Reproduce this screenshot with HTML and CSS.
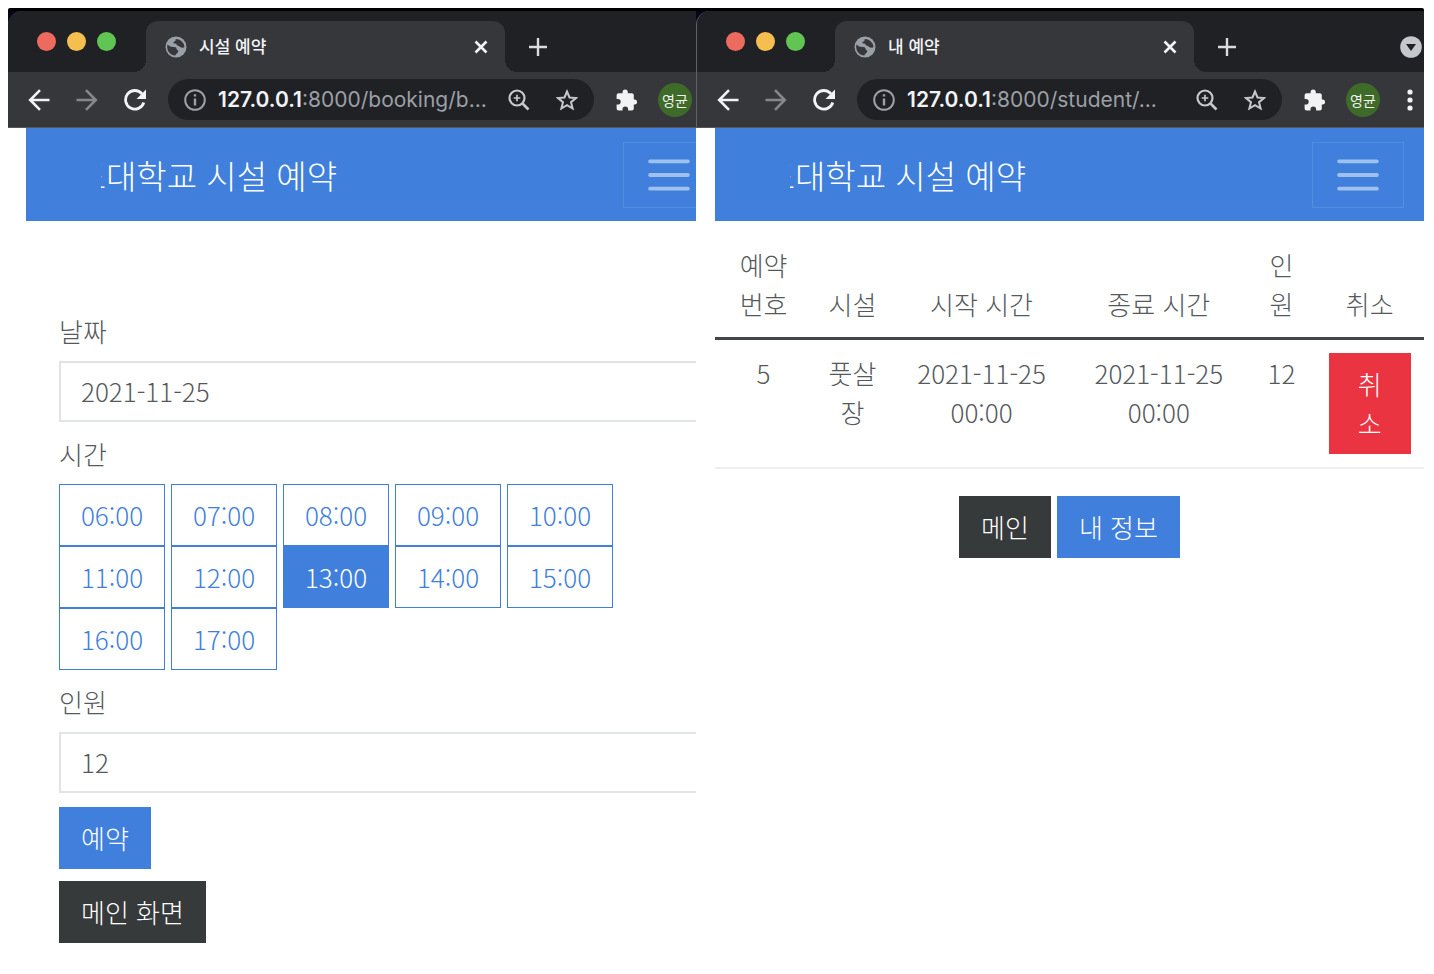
FILE: index.html
```html
<!DOCTYPE html>
<html lang="ko">
<head>
<meta charset="utf-8">
<title>시설 예약</title>
<link rel="stylesheet" href="styles.css">
</head>
<body>
<svg class="sprite" aria-hidden="true">
  <symbol id="globe" viewBox="0 0 22 22"><circle cx="11" cy="11" r="10.500" fill="#9aa0a6"/><path d="M2.500 8.500c2 2 4 2.600 6.500 2.400 2 0 2.500.8 2.500 2 0 1 1.800 1 1.800 2.300 0 1.500-2.300 2.500-3 4.400A8.800 8.800 0 0 1 2.500 8.500zM10 3c1.500.3 1 1.800-.5 2.400-1.800.8-1.500 2 .5 2.200 1.800.2 1.500 1.800 3 2.200 1.800.5 2.800 2 4.500 2 1 0 1.500-.3 2-.8A8.700 8.700 0 0 0 10 3z" fill="#36373b"/></symbol>
  <symbol id="close" viewBox="0 0 14 14"><path d="M1.500 1.500l11 11M12.500 1.500l-11 11" stroke="#f1f3f4" stroke-width="2.600"/></symbol>
  <symbol id="plus" viewBox="0 0 18 18"><path d="M9 0v18M0 9h18" stroke="#dadce0" stroke-width="2.400"/></symbol>
  <symbol id="back" viewBox="0 0 22 22"><path d="M21.500 11H2.500M12 1.200L2.200 11 12 20.800" fill="none" stroke="currentColor" stroke-width="2.600"/></symbol>
  <symbol id="forward" viewBox="0 0 22 22"><path d="M.5 11h19M10 1.200l9.800 9.800-9.800 9.800" fill="none" stroke="currentColor" stroke-width="2.600"/></symbol>
  <symbol id="reload" viewBox="0 0 22 22"><path d="M19.800 13.500A9.300 9.300 0 1 1 18 4.800" fill="none" stroke="#f1f3f4" stroke-width="2.800"/><path d="M22 .5v9.500h-9.500z" fill="#f1f3f4"/></symbol>
  <symbol id="info" viewBox="0 0 22 22"><circle cx="11" cy="11" r="9.800" fill="none" stroke="#9aa0a6" stroke-width="2"/><path d="M11 9.500v7M11 5.200v2.400" stroke="#9aa0a6" stroke-width="2.400"/></symbol>
  <symbol id="zoom" viewBox="0 0 22 22"><circle cx="9" cy="9" r="7.500" fill="none" stroke="#c6c9cc" stroke-width="2.200"/><path d="M14.500 14.500l6 6" stroke="#c6c9cc" stroke-width="2.600"/><path d="M9 5.700v6.600M5.700 9h6.600" stroke="#c6c9cc" stroke-width="1.700"/></symbol>
  <symbol id="star" viewBox="0 0 22 22"><path d="M11 2.500l2.500 6 6.500.5-5 4.200 1.600 6.300L11 16.100l-5.600 3.400L7 13.200 2 9l6.500-.5z" fill="none" stroke="#c6c9cc" stroke-width="2"/></symbol>
  <symbol id="puzzle" viewBox="0 0 22 22"><path d="M19 10.500h-1.200V6.300a2 2 0 0 0-2-2h-4V3a2.600 2.600 0 0 0-5.200 0v1.300h-4a2 2 0 0 0-2 2V10h1.300a2.800 2.800 0 0 1 0 5.600H.6v4a2 2 0 0 0 2 2h3.900v-1.300a2.800 2.800 0 0 1 5.600 0v1.300h3.700a2 2 0 0 0 2-2v-4H19a2.600 2.600 0 0 0 0-5.100z" fill="#f1f3f4"/></symbol>
  <symbol id="kebab" viewBox="0 0 20 22"><circle cx="10" cy="3" r="2.600" fill="#f1f3f4"/><circle cx="10" cy="11" r="2.600" fill="#f1f3f4"/><circle cx="10" cy="19" r="2.600" fill="#f1f3f4"/></symbol>
  <symbol id="caret" viewBox="0 0 22 22"><circle cx="11" cy="11" r="10.800" fill="#c4c7cb"/><path d="M6 8h10l-5 7z" fill="#202124"/></symbol>
  <symbol id="bars" viewBox="0 0 40 34"><path d="M2 4h36M2 17h36M2 30h36" stroke="#a0c0ee" stroke-width="3.600" stroke-linecap="round"/></symbol>
</svg>
<div class="screens">
  <section class="window" aria-label="시설 예약">
    <div class="chrome">
      <div class="tabstrip">
        <div class="lights"><span class="light red"></span><span class="light amber"></span><span class="light green"></span></div>
        <div class="tab"><svg class="icon"><use href="#globe"/></svg><span class="tab-title">시설 예약</span><button class="bare" aria-label="탭 닫기"><svg class="icon-close"><use href="#close"/></svg></button></div>
        <button class="bare new-tab" aria-label="새 탭"><svg class="icon-plus"><use href="#plus"/></svg></button>
      </div>
      <div class="toolbar">
        <div class="nav">
          <button class="bare" aria-label="뒤로"><svg class="icon"><use href="#back"/></svg></button>
          <button class="bare dim" aria-label="앞으로"><svg class="icon"><use href="#forward"/></svg></button>
          <button class="bare" aria-label="새로고침"><svg class="icon"><use href="#reload"/></svg></button>
        </div>
        <div class="omnibox">
          <svg class="icon"><use href="#info"/></svg>
          <div class="url"><b>127.0.0.1</b>:8000/booking/b...</div>
          <button class="bare" aria-label="확대"><svg class="icon"><use href="#zoom"/></svg></button>
          <button class="bare" aria-label="북마크"><svg class="icon"><use href="#star"/></svg></button>
        </div>
        <div class="actions">
          <button class="bare" aria-label="확장 프로그램"><svg class="icon"><use href="#puzzle"/></svg></button>
          <button class="bare avatar">영균</button>
        </div>
      </div>
    </div>
    <div class="page page-cut">
      <header class="navbar">
        <a class="brand" href="#"><span>도대학교 시설 예약</span></a>
        <button class="toggler" aria-label="메뉴"><svg class="icon-bars"><use href="#bars"/></svg></button>
      </header>
      <form class="booking">
        <div class="field">
          <label for="date">날짜</label>
          <input class="control" id="date" type="text" value="2021-11-25">
        </div>
        <fieldset class="field">
          <legend>시간</legend>
          <div class="times">
            <label class="time"><input type="radio" name="time">06:00</label>
            <label class="time"><input type="radio" name="time">07:00</label>
            <label class="time"><input type="radio" name="time">08:00</label>
            <label class="time"><input type="radio" name="time">09:00</label>
            <label class="time"><input type="radio" name="time">10:00</label>
            <label class="time"><input type="radio" name="time">11:00</label>
            <label class="time"><input type="radio" name="time">12:00</label>
            <label class="time"><input type="radio" name="time" checked>13:00</label>
            <label class="time"><input type="radio" name="time">14:00</label>
            <label class="time"><input type="radio" name="time">15:00</label>
            <label class="time"><input type="radio" name="time">16:00</label>
            <label class="time"><input type="radio" name="time">17:00</label>
          </div>
        </fieldset>
        <div class="field">
          <label for="people">인원</label>
          <input class="control" id="people" type="text" value="12">
        </div>
        <div class="stack">
          <button class="btn primary" type="button">예약</button>
          <button class="btn dark" type="button">메인 화면</button>
        </div>
      </form>
    </div>
  </section>

  <section class="window window-front" aria-label="내 예약">
    <div class="chrome">
      <div class="tabstrip">
        <div class="lights"><span class="light red"></span><span class="light amber"></span><span class="light green"></span></div>
        <div class="tab"><svg class="icon"><use href="#globe"/></svg><span class="tab-title">내 예약</span><button class="bare" aria-label="탭 닫기"><svg class="icon-close"><use href="#close"/></svg></button></div>
        <button class="bare new-tab" aria-label="새 탭"><svg class="icon-plus"><use href="#plus"/></svg></button>
        <button class="bare tab-search" aria-label="탭 검색"><svg class="icon"><use href="#caret"/></svg></button>
      </div>
      <div class="toolbar">
        <div class="nav">
          <button class="bare" aria-label="뒤로"><svg class="icon"><use href="#back"/></svg></button>
          <button class="bare dim" aria-label="앞으로"><svg class="icon"><use href="#forward"/></svg></button>
          <button class="bare" aria-label="새로고침"><svg class="icon"><use href="#reload"/></svg></button>
        </div>
        <div class="omnibox">
          <svg class="icon"><use href="#info"/></svg>
          <div class="url"><b>127.0.0.1</b>:8000/student/...</div>
          <button class="bare" aria-label="확대"><svg class="icon"><use href="#zoom"/></svg></button>
          <button class="bare" aria-label="북마크"><svg class="icon"><use href="#star"/></svg></button>
        </div>
        <div class="actions">
          <button class="bare" aria-label="확장 프로그램"><svg class="icon"><use href="#puzzle"/></svg></button>
          <button class="bare avatar">영균</button>
          <button class="bare" aria-label="더보기"><svg class="icon-kebab"><use href="#kebab"/></svg></button>
        </div>
      </div>
    </div>
    <div class="page">
      <header class="navbar">
        <a class="brand" href="#"><span>도대학교 시설 예약</span></a>
        <button class="toggler" aria-label="메뉴"><svg class="icon-bars"><use href="#bars"/></svg></button>
      </header>
      <table class="list">
        <colgroup><col class="c-no"><col class="c-place"><col class="c-when"><col class="c-when"><col class="c-count"><col class="c-cancel"></colgroup>
        <thead>
          <tr><th>예약<br>번호</th><th>시설</th><th>시작 시간</th><th>종료 시간</th><th>인원</th><th>취소</th></tr>
        </thead>
        <tbody>
          <tr><td>5</td><td>풋살장</td><td>2021-11-25 00:00</td><td>2021-11-25 00:00</td><td>12</td><td><button class="btn danger">취소</button></td></tr>
        </tbody>
      </table>
      <div class="links">
        <a class="btn dark" href="#">메인</a>
        <a class="btn primary" href="#">내 정보</a>
      </div>
    </div>
  </section>
</div>
</body>
</html>
```
FILE: styles.css
```css
* { box-sizing: border-box; }

body {
  margin: 0;
  padding: 8px 10px 0 8px;
  background: #fff;
  color: #55595c;
  font-family: "Noto Sans CJK KR", "Noto Sans", sans-serif;
  font-size: 26px;
  font-weight: 300;
  line-height: 39px;
}

button, input { font: inherit; color: inherit; }
svg { display: block; }
.sprite { position: absolute; width: 0; height: 0; }

.screens {
  display: grid;
  grid-template-columns: 688fr 728fr;
  border-top: 3px solid #000;
  border-radius: 2px 2px 0 0;
  background: linear-gradient(#05051c, #05051c) 0 0 / 100% 20px no-repeat;
}

.window { min-width: 0; overflow: hidden; }

/* Browser chrome */
.chrome {
  background: #36373b;
  border-bottom: 1px solid #55575b;
  border-top-left-radius: 14px;
  overflow: hidden;
}
.window-front .chrome { border-left: 1px solid #606266; }

.tabstrip {
  display: flex;
  align-items: center;
  height: 61px;
  padding: 0 2px 0 29px;
  background: #202124;
}
.lights { display: flex; gap: 11px; }
.light { width: 19px; height: 19px; border-radius: 50%; }
.red { background: #ed6a5e; }
.amber { background: #f5bf4f; }
.green { background: #61c554; }

.tab {
  position: relative;
  display: flex;
  flex: 0 1 359px;
  align-items: center;
  align-self: flex-end;
  gap: 12px;
  height: 51px;
  margin-left: 30px;
  padding: 0 17px 0 19px;
  border-radius: 12px 12px 0 0;
  background: #36373b;
}
.tab::before, .tab::after {
  content: "";
  position: absolute;
  bottom: 0;
  width: 12px;
  height: 12px;
}
.tab::before { right: 100%; background: radial-gradient(circle at 0 0, #202124 12px, #36373b 12px); }
.tab::after { left: 100%; background: radial-gradient(circle at 100% 0, #202124 12px, #36373b 12px); }
.tab-title { flex: 1; padding-bottom: 2px; color: #f1f3f4; font-size: 17px; font-weight: 500; line-height: 24px; }

.bare { display: flex; padding: 0; border: 0; background: none; color: #f1f3f4; }
.dim { color: #85878a; }
.new-tab { margin: 10px 0 0 24px; }
.tab-search { margin: 10px 0 0 auto; }
.icon { flex: none; width: 22px; height: 22px; }
.icon-close { width: 14px; height: 14px; }
.icon-plus { width: 18px; height: 18px; }
.icon-kebab { width: 20px; height: 22px; }
.icon-bars { width: 42px; height: 36px; }

.toolbar {
  display: flex;
  align-items: center;
  gap: 22px;
  height: 55px;
  padding: 0 4px 0 20px;
}
.nav { display: flex; gap: 26px; }
.omnibox {
  display: flex;
  flex: 1;
  align-items: center;
  min-width: 0;
  height: 41px;
  padding: 0 16px;
  border-radius: 21px;
  background: #202124;
  gap: 12px;
}
.omnibox .bare + .bare { margin-left: 14px; }
.url {
  flex: 1;
  min-width: 0;
  color: #9aa0a6;
  font-family: Inter, Roboto, sans-serif;
  font-size: 21px;
  font-weight: 400;
  line-height: 30px;
  white-space: nowrap;
}
.url b { color: #f1f3f4; font-weight: 600; }
.actions { display: flex; align-items: center; gap: 20px; }
.avatar {
  align-items: center;
  justify-content: center;
  width: 34px;
  height: 34px;
  border-radius: 50%;
  background: #3f6b28;
  font-size: 14px;
  font-weight: 400;
  line-height: 20px;
}

/* Site pages */
.page { padding-left: 18px; background: #fff; }
.window-front .page { padding-left: 19px; }
.page-cut { margin-right: -39px; }

.navbar {
  display: flex;
  align-items: center;
  justify-content: space-between;
  height: 93px;
  padding: 0 20px 0 75px;
  background: #4080dc;
}
.brand {
  display: flex;
  justify-content: flex-end;
  width: 236px;
  overflow: hidden;
  color: #fff;
  font-size: 33px;
  line-height: 50px;
  text-decoration: none;
  white-space: nowrap;
}
.toggler {
  display: flex;
  align-items: center;
  justify-content: center;
  width: 92px;
  height: 66px;
  padding: 0;
  border: 1px solid #538de0;
  background: none;
}

.booking {
  display: flex;
  flex-direction: column;
  gap: 12px;
  padding: 90px 33px 0;
}
.field { display: flex; flex-direction: column; gap: 11px; min-width: 0; margin: 0; padding: 0; border: 0; }
legend { padding: 0 0 11px; }
.control {
  width: 100%;
  height: 61px;
  padding: 0 20px 2px;
  border: 2px solid #e1e4e7;
  border-radius: 0;
  background: #fff;
}
.times { display: grid; grid-template-columns: repeat(5, 106px); column-gap: 6px; }
.time {
  position: relative;
  height: 62px;
  padding: 10px 0;
  border: 1px solid #4080dc;
  color: #4080dc;
  line-height: 40px;
  text-align: center;
}
.time input { position: absolute; inset: 0; width: 100%; height: 100%; margin: 0; opacity: 0; }
.time:has(:checked) { background: #4080dc; color: #fff; }
.stack { display: flex; flex-direction: column; align-items: flex-start; gap: 12px; padding-top: 2px; }

.btn {
  padding: 11px 22px 12px;
  border: 0;
  color: #fff;
  line-height: 39px;
  text-decoration: none;
}
.primary { background: #4080dc; }
.dark { background: #373a3b; }
.danger { display: block; width: 100%; background: #ea3442; }

.list { width: 100%; margin-top: 11px; border-collapse: collapse; table-layout: fixed; text-align: center; }
.list th, .list td { padding: 13px; font-weight: 300; }
.list th { padding-bottom: 14px; vertical-align: bottom; border-bottom: 3px solid #434648; }
.list td { vertical-align: top; border-bottom: 2px solid #eceeef; }
.c-no { width: 13.7%; }
.c-place { width: 11.4%; }
.c-when { width: 25%; }
.c-count { width: 9.6%; }
.c-cancel { width: 15.3%; }
.links { display: flex; justify-content: center; gap: 6px; margin-top: 27px; }
```
